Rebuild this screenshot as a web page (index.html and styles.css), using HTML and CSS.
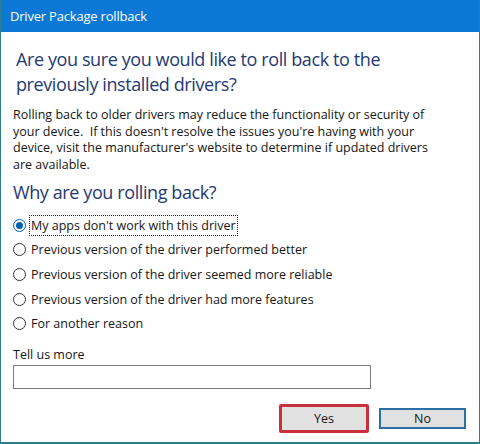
FILE: index.html
```html
<!DOCTYPE html>
<html>
<head>
<meta charset="utf-8">
<link rel="stylesheet" href="styles.css">
</head>
<body>
<div class="window">
  <div class="titlebar">Driver Package rollback</div>
  <div class="content">
    <h1 class="main">Are you sure you would like to roll back to the previously installed drivers?</h1>
    <p class="desc">Rolling back to older drivers may reduce the functionality or security of your device.&nbsp; If this doesn't resolve the issues you're having with your device, visit the manufacturer's website to determine if updated drivers are available.</p>
    <h2 class="sub">Why are you rolling back?</h2>
    <div class="options">
      <div class="opt"><span class="radio checked"></span><span class="label focus">My apps don't work with this driver</span></div>
      <div class="opt"><span class="radio"></span><span class="label">Previous version of the driver performed better</span></div>
      <div class="opt"><span class="radio"></span><span class="label">Previous version of the driver seemed more reliable</span></div>
      <div class="opt"><span class="radio"></span><span class="label">Previous version of the driver had more features</span></div>
      <div class="opt"><span class="radio"></span><span class="label">For another reason</span></div>
    </div>
    <div class="more">Tell us more</div>
    <div class="input"></div>
    <div class="buttons">
      <div class="btn yes">Yes</div>
      <div class="btn no">No</div>
    </div>
  </div>
</div>
</body>
</html>
```
FILE: styles.css
```css
* { box-sizing: border-box; }
html, body { margin: 0; padding: 0; background: #fff; }
body { width: 480px; height: 444px; font-family: "Open Sans", "Noto Sans", sans-serif; color: #161616; }
.window {
  width: 480px; height: 444px;
  border-left: 1px solid #2d7d8f;
  border-right: 1px solid #2d7d8f;
  border-bottom: 2px solid #2d7d8f;
  display: flex; flex-direction: column;
  overflow: hidden;
}
.titlebar {
  height: 32px; background: #0a78d4; color: #fff;
  margin: 0 -1px;
  padding-left: 10px; font-size: 13px; letter-spacing: -0.2px; line-height: 32px;
}
.content { padding: 0 12px; display: flex; flex-direction: column; }
.main {
  margin: 15px 0 0 3px; max-width: 400px; font-weight: normal; font-size: 18px; line-height: 25px;
  color: #1f3a73; letter-spacing: -0.4px;
}
.desc { margin: 10px 0 0; max-width: 430px; font-size: 12.5px; line-height: 16.7px; }
.sub { margin: 5px 0 0; font-weight: normal; font-size: 18px; line-height: 26px; color: #1f3a73; letter-spacing: -0.4px; }
.options { margin-top: 8px; display: flex; flex-direction: column; }
.opt { height: 24.7px; display: flex; align-items: center; gap: 3px; font-size: 12.5px; }
.radio { width: 13px; height: 13px; border: 1px solid #333; border-radius: 50%; flex: none; display: flex; align-items: center; justify-content: center; }
.radio.checked { border-color: #0063b1; }
.radio.checked::after { content: ""; width: 7px; height: 7px; border-radius: 50%; background: #0063b1; }
.label { padding: 2px 1px; border: 1px dotted transparent; line-height: 15px; }
.label.focus { border-color: #222; }
.more { margin-top: 10px; font-size: 12.5px; line-height: 17px; }
.input { margin-top: 2px; width: 358px; height: 24px; border: 1px solid #7a7a7a; }
.buttons { margin-top: 15px; display: flex; justify-content: flex-end; align-items: center; gap: 10px; padding-right: 1px; }
.btn { background: #e1e1e1; font-size: 12.5px; display: flex; align-items: center; justify-content: center; }
.yes { width: 90px; height: 29px; border: 3px solid #c8303a; border-radius: 2px; }
.no { width: 87px; height: 21px; border: 2px solid #2a6fa8; }
```
